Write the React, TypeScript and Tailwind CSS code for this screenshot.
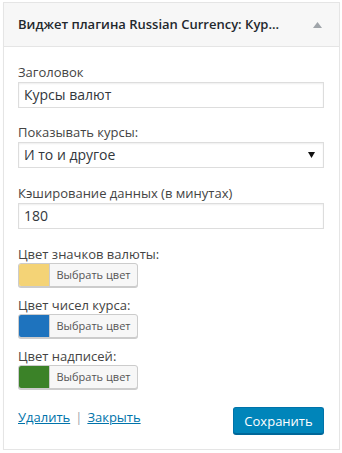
import React from "react";

const colorFields = [
  { label: "Цвет значков валюты:", color: "bg-[#f4d376]", mt: "mt-[17px]" },
  { label: "Цвет чисел курса:", color: "bg-[#1e73be]", mt: "mt-[10px]" },
  { label: "Цвет надписей:", color: "bg-[#3b8228]", mt: "mt-[10px]" },
];

function ColorButton({ color }: { color: string }) {
  return (
    <button className="flex h-[24px] w-[120px] overflow-hidden rounded-[3px] border border-[#cccccc] bg-[#f7f7f7] shadow-[0_1px_0_#cccccc]">
      <span className={`h-full w-[31px] shrink-0 border-r border-[#cccccc] ${color}`} />
      <span className="flex flex-1 items-center justify-center text-[11px] text-[#555555]">
        Выбрать цвет
      </span>
    </button>
  );
}

export default function App() {
  return (
    <div className="pl-[3px] pt-[2px] font-['Open_Sans',sans-serif]">
      <div className="w-[337px] border border-[#e5e5e5] bg-white shadow-[0_1px_1px_rgba(0,0,0,0.04)]">
        {/* Header */}
        <div className="flex h-[44px] items-center justify-between border-b border-[#e5e5e5] bg-[#f7f7f7] pl-[14px] pr-[17px]">
          <span className="text-[13px] font-semibold text-[#23282d]">
            Виджет плагина Russian Currency: Кур...
          </span>
          <svg width="9" height="6" viewBox="0 0 9 6">
            <path d="M0 6 L4.5 0 L9 6 Z" fill="#a0a5aa" />
          </svg>
        </div>

        {/* Body */}
        <div className="pb-[15px] pl-[14px] pr-[15px] pt-[16px] text-[13px] leading-[18px] text-[#444444]">
          <div>Заголовок</div>
          <div className="mt-[1px] flex h-[26px] items-center border border-[#dddddd] px-[5px] text-[14px] text-[#32373c] shadow-[inset_0_1px_2px_rgba(0,0,0,0.07)]">
            Курсы валют
          </div>

          <div className="mt-[15px]">Показывать курсы:</div>
          <div className="mt-[1px] flex h-[26px] items-center justify-between border border-[#dddddd] pl-[5px] pr-[8px] text-[14px] text-[#32373c] shadow-[inset_0_1px_2px_rgba(0,0,0,0.07)]">
            <span>И то и другое</span>
            <svg width="7" height="6" viewBox="0 0 7 6">
              <path d="M0 0 H7 L3.5 6 Z" fill="#111111" />
            </svg>
          </div>

          <div className="mt-[16px]">Кэширование данных (в минутах)</div>
          <div className="mt-[1px] flex h-[26px] items-center border border-[#dddddd] px-[5px] text-[14px] text-[#32373c] shadow-[inset_0_1px_2px_rgba(0,0,0,0.07)]">
            180
          </div>

          {colorFields.map((f) => (
            <div key={f.label} className={f.mt}>
              <div className="leading-[17px]">{f.label}</div>
              <ColorButton color={f.color} />
            </div>
          ))}

          {/* Footer */}
          <div className="mt-[18px] flex items-start justify-between">
            <div className="mt-[1px] flex items-center text-[13px]">
              <a href="#" className="text-[#0073aa] underline">
                Удалить
              </a>
              <span className="mx-[5px] text-[#a0a5aa]">|</span>
              <a href="#" className="text-[#0073aa] underline">
                Закрыть
              </a>
            </div>
            <button className="h-[27px] w-[91px] rounded-[3px] border border-[#0073aa] border-b-[#006799] bg-[#0085ba] text-[13px] text-white shadow-[0_1px_0_#006799]">
              Сохранить
            </button>
          </div>
        </div>
      </div>
    </div>
  );
}
